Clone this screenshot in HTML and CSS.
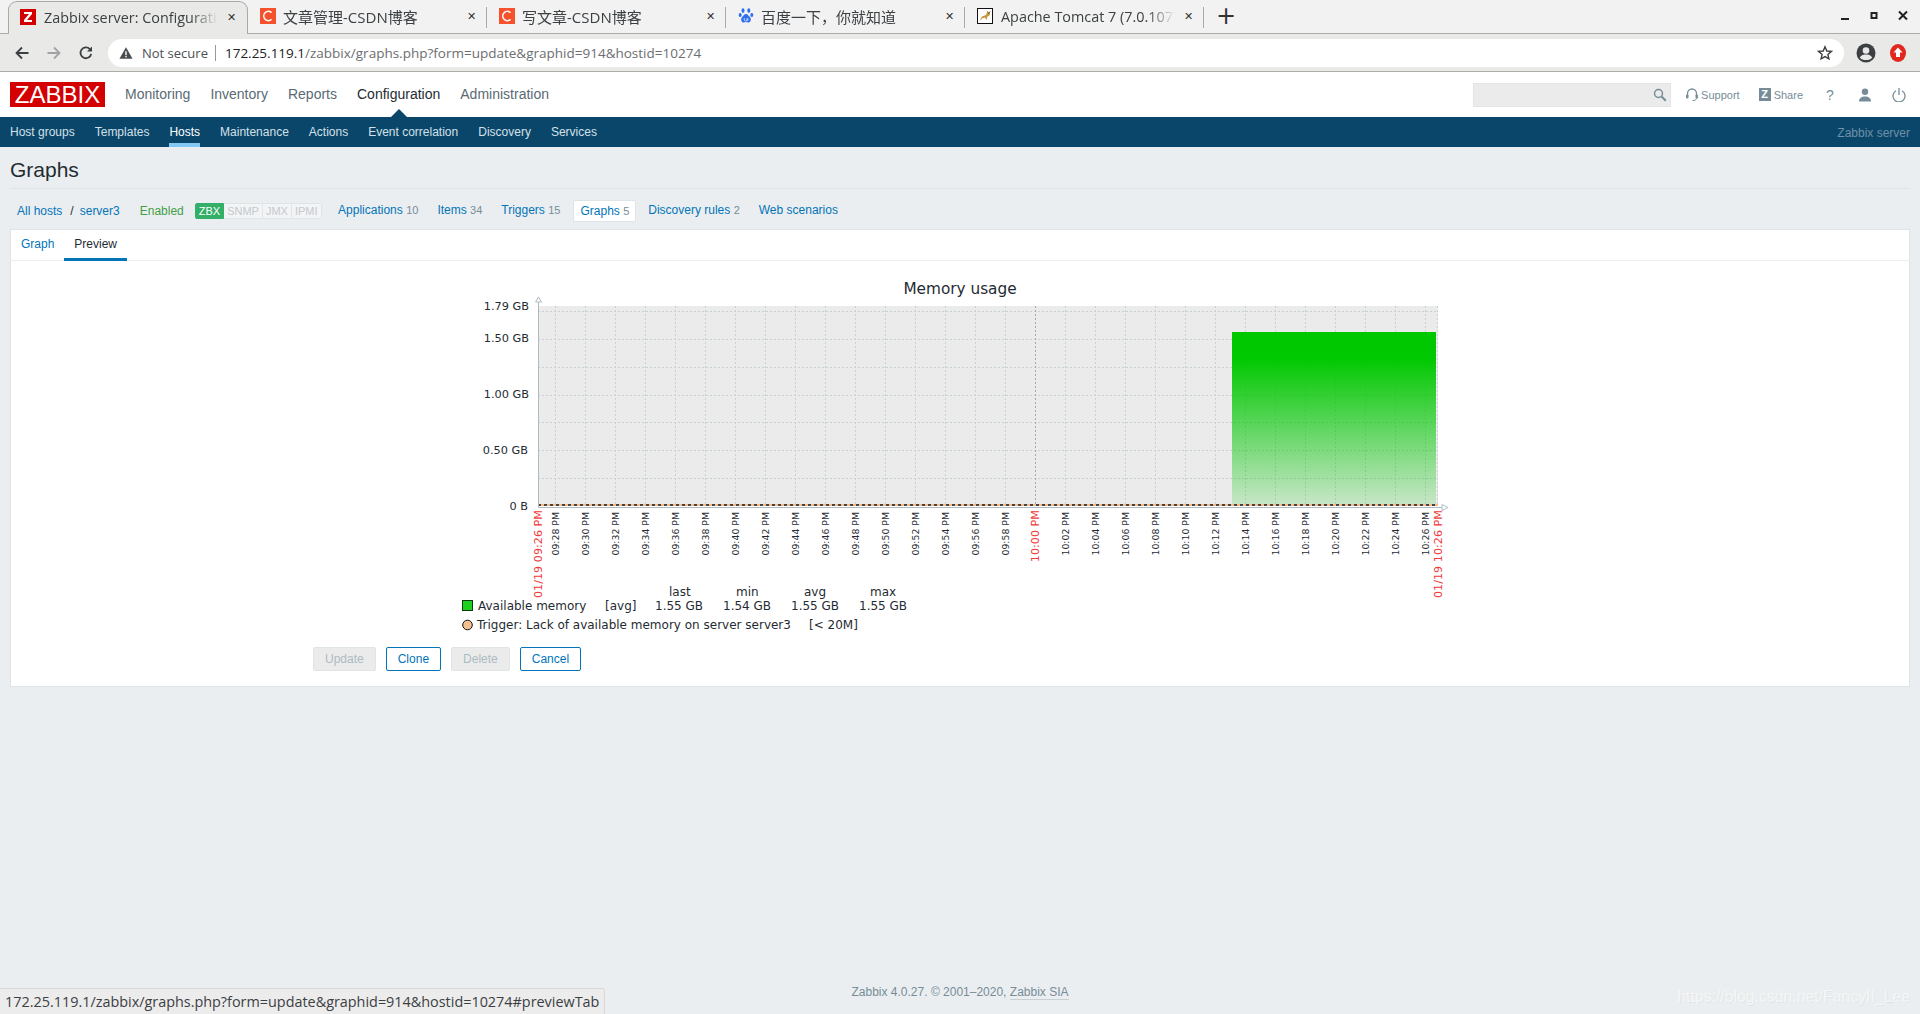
FILE: index.html
```html
<!DOCTYPE html>
<html lang="en">
<head>
<meta charset="utf-8">
<title>Zabbix server: Configuration of graphs</title>
<link rel="stylesheet" href="styles.css">
</head>
<body>
<div class="tabstrip">
  <div class="tab active">
    <svg class="fav" viewBox="0 0 16 16"><rect width="16" height="16" fill="#d40000"/><path d="M4 3h8v2l-5 6h5v2H4v-2l5-6H4z" fill="#fff"/></svg>
    <span class="tab-title">Zabbix server: Configuration of graphs</span>
    <span class="tab-x">✕</span>
  </div>
  <div class="tab">
    <svg class="fav" viewBox="0 0 16 16"><rect width="16" height="16" fill="#f4512c"/><path d="M11.500 4.600A4.600 4.600 0 1 0 11.500 11.400" fill="none" stroke="#fff" stroke-width="1.600"/></svg>
    <span class="tab-title cjk">文章管理-CSDN博客</span>
    <span class="tab-x">✕</span>
  </div>
  <div class="tab">
    <svg class="fav" viewBox="0 0 16 16"><rect width="16" height="16" fill="#f4512c"/><path d="M11.500 4.600A4.600 4.600 0 1 0 11.500 11.400" fill="none" stroke="#fff" stroke-width="1.600"/></svg>
    <span class="tab-title cjk">写文章-CSDN博客</span>
    <span class="tab-x">✕</span>
  </div>
  <div class="tab">
    <svg class="fav" viewBox="0 0 16 16"><g fill="#2d6ff0"><ellipse cx="5" cy="2.600" rx="1.500" ry="2.300"/><ellipse cx="10.800" cy="2.600" rx="1.500" ry="2.300"/><ellipse cx="2.200" cy="7" rx="1.500" ry="2.100"/><ellipse cx="13.800" cy="7" rx="1.500" ry="2.100"/><path d="M8 6c2 0 2.600 2 4 3.200 1.600 1.400 1 5.300-2 5.300-1 0-1.300-.4-2-.4s-1 .4-2 .4c-3 0-3.600-3.900-2-5.300C5.400 8 6 6 8 6z"/></g><path d="M6.300 10v2.200c0 1 2.800 1 2.800 0V10M9.800 10.500v2.300" stroke="#fff" stroke-width=".7" fill="none"/></svg>
    <span class="tab-title cjk">百度一下，你就知道</span>
    <span class="tab-x">✕</span>
  </div>
  <div class="tab">
    <svg class="fav" viewBox="0 0 16 16"><rect x=".5" y=".5" width="15" height="15" fill="#fff" stroke="#111"/><path d="M2.500 13 5 8.500l4-1.500 1.500-3.500 1 1.300 1.700-1.300-.3 3.500-2.700 2-.5 3-2-2.500-2.500 1z" fill="#c8963c"/><path d="M10.500 3.500l1 2L13.200 3.500" fill="none" stroke="#6b4a14" stroke-width=".8"/></svg>
    <span class="tab-title">Apache Tomcat 7 (7.0.107)</span>
    <span class="tab-x">✕</span>
  </div>
  <span class="newtab">+</span>
  <div class="winctl">
    <svg width="12" height="12" viewBox="0 0 12 12"><rect x="2" y="8" width="8" height="2" fill="#222"/></svg>
    <svg width="12" height="12" viewBox="0 0 12 12"><rect x="3.500" y="3" width="5" height="5" fill="none" stroke="#222" stroke-width="2"/></svg>
    <svg width="12" height="12" viewBox="0 0 12 12"><path d="M2 1.500l8 8M10 1.500l-8 8" stroke="#222" stroke-width="2"/></svg>
  </div>
</div>
<div class="toolbar">
  <svg class="tb-ic" viewBox="0 0 16 16"><path d="M14.500 8H2.500M8 2.500 2.500 8 8 13.500" fill="none" stroke="#3c4043" stroke-width="1.800"/></svg>
  <svg class="tb-ic" viewBox="0 0 16 16"><path d="M1.500 8h12M8 2.500 13.500 8 8 13.500" fill="none" stroke="#a0a2a4" stroke-width="1.800"/></svg>
  <svg class="tb-ic" viewBox="0 0 16 16"><path d="M13.200 8.800A5.400 5.400 0 1 1 11.900 4.200" fill="none" stroke="#3c4043" stroke-width="1.800"/><path d="M14 1.500v5h-5z" fill="#3c4043"/></svg>
  <div class="omnibox">
    <svg class="warn" viewBox="0 0 16 16"><path d="M8 1.500 15.500 14.500H.5z" fill="#4a4d50"/><rect x="7.200" y="6" width="1.600" height="4.500" fill="#fff"/><rect x="7.200" y="11.400" width="1.600" height="1.600" fill="#fff"/></svg>
    <span class="notsecure">Not secure</span>
    <span class="omni-sep"></span>
    <span class="url"><b class="host">172.25.119.1</b>/zabbix/graphs.php?form=update&amp;graphid=914&amp;hostid=10274</span>
    <svg class="star" viewBox="0 0 16 16"><path d="M8 1.800 9.800 6l4.600.4-3.500 3 1 4.500L8 11.600l-3.900 2.300 1-4.500-3.500-3L6.200 6z" fill="none" stroke="#3c4043" stroke-width="1.400"/></svg>
  </div>
  <svg class="acct" viewBox="0 0 20 20"><circle cx="10" cy="10" r="9.500" fill="#3c4043"/><circle cx="10" cy="7.500" r="3.300" fill="#e8e8e6"/><path d="M3.800 14.500C5 12 8 11.500 10 11.500s5 .5 6.200 3C15 16.500 12.500 17 10 17s-5-.5-6.200-2.500z" fill="#e8e8e6"/></svg>
  <svg class="upd" viewBox="0 0 16 18"><ellipse cx="8" cy="9" rx="8" ry="9" fill="#e0281e"/><path d="M8 3.500 12.500 8.500H10v4.500H6V8.500H3.500z" fill="#fff"/></svg>
</div>
<header class="zbx-head">
  <div class="logo">ZABBIX</div>
  <nav class="mainmenu">
    <a>Monitoring</a><a>Inventory</a><a>Reports</a><a class="sel">Configuration</a><a>Administration</a>
  </nav>
  <div class="head-right">
    <div class="search">
      <svg width="14" height="14" viewBox="0 0 14 14"><circle cx="5.500" cy="5.500" r="4" fill="none" stroke="#768d99" stroke-width="1.500"/><path d="M8.500 8.500l4.300 4.300" stroke="#768d99" stroke-width="2"/></svg>
    </div>
    <a class="hlink support"><svg width="12" height="14" viewBox="0 0 12 14"><path d="M1.500 8V5.500a4.500 4.500 0 0 1 9 0V8" fill="none" stroke="#768d99" stroke-width="1.300"/><rect x="0" y="6.500" width="2.500" height="4" rx="1" fill="#768d99"/><rect x="9.500" y="6.500" width="2.500" height="4" rx="1" fill="#768d99"/><path d="M10.500 10c0 2-2 2.600-4 2.600" fill="none" stroke="#768d99"/></svg>Support</a>
    <a class="hlink share"><span class="zsq">Z</span>Share</a>
    <a class="hicon qm">?</a>
    <svg class="hicon" width="14" height="14" viewBox="0 0 14 14"><circle cx="7" cy="3.800" r="3.200" fill="#768d99"/><path d="M1 13.500c0-3.500 2.500-5 6-5s6 1.500 6 5z" fill="#768d99"/></svg>
    <svg class="hicon" width="14" height="14" viewBox="0 0 14 14"><path d="M4 2.800a6 6 0 1 0 6 0" fill="none" stroke="#768d99" stroke-width="1.300"/><path d="M7 0v7" stroke="#768d99" stroke-width="1.300"/></svg>
  </div>
  <span class="menu-tri"></span>
</header>
<nav class="subnav">
  <a>Host groups</a><a>Templates</a><a class="sel">Hosts</a><a>Maintenance</a><a>Actions</a><a>Event correlation</a><a>Discovery</a><a>Services</a>
  <span class="srv">Zabbix server</span>
</nav>
<main class="page">
  <h1 class="ptitle">Graphs</h1>
  <div class="hostnav">
    <a class="crumb">All hosts</a><span class="slash">/</span><a class="crumb">server3</a>
    <span class="enabled">Enabled</span>
    <span class="badges"><span class="bdg on">ZBX</span><span class="bdg">SNMP</span><span class="bdg">JMX</span><span class="bdg">IPMI</span></span>
    <a class="hn first">Applications <i>10</i></a>
    <a class="hn">Items <i>34</i></a>
    <a class="hn">Triggers <i>15</i></a>
    <a class="hn cur">Graphs <i>5</i></a>
    <a class="hn">Discovery rules <i>2</i></a>
    <a class="hn">Web scenarios</a>
  </div>
  <section class="card">
    <div class="cardtabs"><a class="ct">Graph</a><a class="ct on">Preview</a></div>
    <div class="graphwrap">
      <svg class="graph" width="1000" height="366" viewBox="0 0 1000 366">
        <defs>
          <linearGradient id="memfill" x1="0" y1="0" x2="0" y2="1">
            <stop offset="0" stop-color="#00c800"/>
            <stop offset=".15" stop-color="#00c800"/>
            <stop offset="1" stop-color="#00c800" stop-opacity=".15"/>
          </linearGradient>
        </defs>
        <text class="gt" x="500" y="24" text-anchor="middle">Memory usage</text>
        <rect x="78" y="36" width="900" height="200" fill="#ebebeb"/>
        <path class="grid" d="M78 41.500H978M78 69.500H978M78 97.500H978M78 125.500H978M78 152.500H978M78 180.500H978M78 208.500H978"/>
        <path class="grid" d="M95.500 36V236M125.500 36V236M155.500 36V236M185.500 36V236M215.500 36V236M245.500 36V236M275.500 36V236M305.500 36V236M335.500 36V236M365.500 36V236M395.500 36V236M425.500 36V236M455.500 36V236M485.500 36V236M515.500 36V236M545.500 36V236M605.500 36V236M635.500 36V236M665.500 36V236M695.500 36V236M725.500 36V236M755.500 36V236M785.500 36V236M815.500 36V236M845.500 36V236M875.500 36V236M905.500 36V236M935.500 36V236M965.500 36V236M977.500 36V236"/>
        <path class="grid-mid" d="M575.500 36V236"/>
        <rect x="772" y="62" width="204" height="173" fill="url(#memfill)"/>
        <path d="M78 235H978" stroke="#f5b98a" stroke-width="2"/>
        <path d="M78 235H978" stroke="#444" stroke-width="2" stroke-dasharray="3 3"/>
        <path class="axis" d="M78.500 32V237.500H982"/>
        <path class="arrow" d="M75.500 32 78.500 27 81.500 32zM982 234.500 988 237.500 982 240.500z"/>
        <g class="yl">
          <text x="69" y="40">1.79 GB</text>
          <text x="69" y="72">1.50 GB</text>
          <text x="69" y="128">1.00 GB</text>
          <text x="68" y="184">0.50 GB</text>
          <text x="68" y="240">0 B</text>
        </g>
        <g class="tl">
          <text transform="translate(99 242) rotate(-90)" text-anchor="end">09:28 PM</text>
          <text transform="translate(129 242) rotate(-90)" text-anchor="end">09:30 PM</text>
          <text transform="translate(159 242) rotate(-90)" text-anchor="end">09:32 PM</text>
          <text transform="translate(189 242) rotate(-90)" text-anchor="end">09:34 PM</text>
          <text transform="translate(219 242) rotate(-90)" text-anchor="end">09:36 PM</text>
          <text transform="translate(249 242) rotate(-90)" text-anchor="end">09:38 PM</text>
          <text transform="translate(279 242) rotate(-90)" text-anchor="end">09:40 PM</text>
          <text transform="translate(309 242) rotate(-90)" text-anchor="end">09:42 PM</text>
          <text transform="translate(339 242) rotate(-90)" text-anchor="end">09:44 PM</text>
          <text transform="translate(369 242) rotate(-90)" text-anchor="end">09:46 PM</text>
          <text transform="translate(399 242) rotate(-90)" text-anchor="end">09:48 PM</text>
          <text transform="translate(429 242) rotate(-90)" text-anchor="end">09:50 PM</text>
          <text transform="translate(459 242) rotate(-90)" text-anchor="end">09:52 PM</text>
          <text transform="translate(489 242) rotate(-90)" text-anchor="end">09:54 PM</text>
          <text transform="translate(519 242) rotate(-90)" text-anchor="end">09:56 PM</text>
          <text transform="translate(549 242) rotate(-90)" text-anchor="end">09:58 PM</text>
          <text transform="translate(609 242) rotate(-90)" text-anchor="end">10:02 PM</text>
          <text transform="translate(639 242) rotate(-90)" text-anchor="end">10:04 PM</text>
          <text transform="translate(669 242) rotate(-90)" text-anchor="end">10:06 PM</text>
          <text transform="translate(699 242) rotate(-90)" text-anchor="end">10:08 PM</text>
          <text transform="translate(729 242) rotate(-90)" text-anchor="end">10:10 PM</text>
          <text transform="translate(759 242) rotate(-90)" text-anchor="end">10:12 PM</text>
          <text transform="translate(789 242) rotate(-90)" text-anchor="end">10:14 PM</text>
          <text transform="translate(819 242) rotate(-90)" text-anchor="end">10:16 PM</text>
          <text transform="translate(849 242) rotate(-90)" text-anchor="end">10:18 PM</text>
          <text transform="translate(879 242) rotate(-90)" text-anchor="end">10:20 PM</text>
          <text transform="translate(909 242) rotate(-90)" text-anchor="end">10:22 PM</text>
          <text transform="translate(939 242) rotate(-90)" text-anchor="end">10:24 PM</text>
          <text transform="translate(969 242) rotate(-90)" text-anchor="end">10:26 PM</text>
        </g>
        <g class="tr">
          <text transform="translate(82 240) rotate(-90)" text-anchor="end">01/19 09:26 PM</text>
          <text transform="translate(579 240) rotate(-90)" text-anchor="end">10:00 PM</text>
          <text transform="translate(982 240) rotate(-90)" text-anchor="end">01/19 10:26 PM</text>
        </g>
        <g class="lg">
          <text x="209" y="326">last</text>
          <text x="276" y="326">min</text>
          <text x="344" y="326">avg</text>
          <text x="410" y="326">max</text>
          <rect x="2.500" y="330.500" width="10" height="10" fill="#1ed01e" stroke="#0a3a0a"/>
          <text x="18" y="340">Available memory</text>
          <text x="145" y="340">[avg]</text>
          <text x="195" y="340">1.55 GB</text>
          <text x="263" y="340">1.54 GB</text>
          <text x="331" y="340">1.55 GB</text>
          <text x="399" y="340">1.55 GB</text>
          <circle cx="7.500" cy="355" r="4.800" fill="#f5c090" stroke="#111"/>
          <text x="17" y="359">Trigger: Lack of available memory on server server3</text>
          <text x="349" y="359">[&lt; 20M]</text>
        </g>
      </svg>
    </div>
    <div class="formbtns">
      <button class="btn dis">Update</button>
      <button class="btn">Clone</button>
      <button class="btn dis">Delete</button>
      <button class="btn">Cancel</button>
    </div>
  </section>
  <footer class="foot">Zabbix 4.0.27. © 2001–2020, <a>Zabbix SIA</a></footer>
</main>
<div class="status">172.25.119.1/zabbix/graphs.php?form=update&amp;graphid=914&amp;hostid=10274#previewTab</div>
<div class="wm">https://blog.csdn.net/FancyII_Lee</div>
</body>
</html>
```
FILE: styles.css
```css
*{box-sizing:border-box}
html,body{margin:0;height:1014px;overflow:hidden}
body{display:flex;flex-direction:column;font-family:"Liberation Sans",Arial,sans-serif;font-size:12px;background:#ebeef0;color:#1f2c33}
a{cursor:pointer}

.tabstrip{height:34px;flex:none;display:flex;align-items:stretch;background:#f2f2f2;padding:1px 0 0 8px;border-bottom:1px solid #aeaca8;font-family:"Open Sans","Noto Sans CJK SC",sans-serif;font-size:14.400px;color:#3c4043;position:relative}
.tab{width:239px;display:flex;align-items:center;padding:0 5.500px 2px 12px;position:relative}
.tab::after{content:"";position:absolute;right:0;top:6px;height:21px;width:1px;background:#aaa}
.tab.active{width:240px;background:#e9e9e7;border:1px solid #a9a9a6;border-bottom:0;border-radius:9px 9px 0 0;margin-bottom:-1px;color:#3c4043;padding-left:11px}
.tab.active::after{display:none}
.fav{width:16px;height:16px;flex:none;margin-right:8px}
.tab-title{flex:1;white-space:nowrap;overflow:hidden;margin-right:4px;-webkit-mask-image:linear-gradient(90deg,#000 84%,transparent);mask-image:linear-gradient(90deg,#000 84%,transparent);min-width:0}
.tab-title.cjk{font-size:15px;margin-left:-1px}
.tab-x{flex:none;width:20px;text-align:center;font-size:11px;font-family:"DejaVu Sans",sans-serif;color:#333;font-weight:700}
.newtab{font-size:24px;line-height:30px;width:44px;text-align:center;color:#333;font-family:"DejaVu Sans",sans-serif}
.winctl{margin-left:auto;display:flex;gap:17px;align-items:center;padding:0 11px 2px 0}

.toolbar{height:38px;flex:none;background:#e9e9e7;border-bottom:1px solid #aeaca8;display:flex;align-items:center;padding:0 14px}
.tb-ic{width:16px;height:16px;flex:none;margin-right:16px}
.omnibox{width:1736px;height:28px;margin-left:-2px;background:#fff;border-radius:14px;display:flex;align-items:center;padding:0 10px 0 11px;font-family:"Open Sans",sans-serif;font-size:13.500px;color:#5f6368;flex:none}
.warn{width:14px;height:14px;margin-right:9px;flex:none}
.notsecure{color:#4c4f52;font-size:13px}
.omni-sep{width:1px;height:16px;background:#999;margin:0 9px 0 7px}
.url{flex:1;color:#6c6e70;white-space:nowrap}
.host{font-weight:400;color:#202124}
.star{width:16px;height:16px;flex:none;margin-right:1px}
.acct{width:20px;height:20px;flex:none;margin-left:12px}
.upd{width:16px;height:18px;flex:none;margin-left:14px}

.zbx-head{height:45px;flex:none;background:#fff;display:flex;align-items:center;padding:0 14px 0 10px;position:relative}
.logo{width:95px;height:25px;background:#d40000;color:#fff;font-size:24px;line-height:26px;text-align:center;white-space:nowrap}
.mainmenu{display:flex;gap:20px;margin:-2px 0 0 20px;font-size:14px;color:#5a6a74}
.mainmenu .sel{color:#1f2c33}
.menu-tri{position:absolute;left:391px;bottom:0;width:0;height:0;border:8px solid transparent;border-top:0;border-bottom-color:#0a466a}
.head-right{margin-left:auto;display:flex;align-items:center;color:#768d99;font-size:11px}
.search{width:198px;height:24px;background:#ebebeb;border:1px solid #e2e4e6;display:flex;align-items:center;justify-content:flex-end;padding-right:3px}
.hlink{display:flex;align-items:center;gap:3px}
.support{margin-left:15px}
.share{margin-left:19px}
.zsq{width:12px;height:13px;background:#768d99;color:#fff;font-weight:700;font-size:11px;line-height:13px;text-align:center}
.hicon{margin-left:20px;flex:none}
.qm{margin-left:23px;font-size:14px;width:8px}
.head-right .qm + svg{margin-left:24px}

.subnav{height:30px;flex:none;background:#0a466a;display:flex;align-items:center;gap:20px;padding:0 10px;color:#d4e0e8}
.subnav a{height:30px;line-height:31px}
.subnav .sel{color:#fff;border-bottom:4px solid #84c8f4}
.srv{margin-left:auto;color:#6e90a8;padding-top:1px}

.page{flex:1;display:flex;flex-direction:column;padding:0 10px;min-height:0}
.ptitle{margin:0;height:42px;border-bottom:1px solid #e0e4e7;font-size:21px;font-weight:400;line-height:45px;color:#1f2c33}
.hostnav{display:flex;align-items:center;height:40px;padding:3px 0 0 7px;color:#0275b8}
.crumb{color:#0275b8}
.slash{margin:0 6px 0 8px;color:#1f2c33}
.enabled{color:#429e47;margin-left:20px}
.badges{display:flex;height:16px;margin-left:11px;margin-right:3.500px}
.bdg{padding:0 3px;border:1px solid #dfe4e7;border-left:0;color:#c3c9cc;font-size:11px;line-height:14px;background:#f3f4f5}
.bdg.on{background:#34af67;color:#fff;border:1px solid #34af67;border-radius:2px 0 0 2px}
.bdg:last-child{border-radius:0 2px 2px 0}
.hn{padding:0 6px;height:22px;line-height:20px;margin-left:7px;border:0}
.hn i{font-style:normal;color:#768d99;font-size:11px}
.hn.cur{background:#fff;border:1px solid #dfe4e7;border-radius:2px;padding:0 6px}
.hn.cur + .hn{margin-left:6px}
.card{height:458px;flex:none;background:#fff;border:1px solid #dfe4e7;display:flex;flex-direction:column}
.cardtabs{height:31px;flex:none;display:flex;border-bottom:1px solid #ebeef0;padding-left:0}
.ct{padding:0 10px;color:#0275b8;line-height:28px;height:31px}
.ct.on{color:#1f2c33;border-bottom:3px solid #0275b8}
.graphwrap{display:flex;justify-content:center;height:386px;flex:none;padding-top:9px}
.graph{display:block;overflow:visible;font-family:"DejaVu Sans",sans-serif}
.gt{font-size:15.300px;fill:#1f2c33}
.grid{fill:none;stroke:#c6d0d6;stroke-width:1;stroke-dasharray:2 2}
.grid-mid{fill:none;stroke:#a9a9a9;stroke-width:1;stroke-dasharray:2 2}
.axis{fill:none;stroke:#acbbc2;stroke-width:1}
.arrow{fill:#fff;stroke:#acbbc2;stroke-width:1}
.yl text{font-size:11.300px;fill:#1f2c33;text-anchor:end}
.tl text{font-size:9.330px;fill:#1f2c33}
.tr text{font-size:11.200px;fill:#ef3a3a}
.lg text{font-size:12px;fill:#1f2c33}
.formbtns{display:flex;gap:10px;padding-left:302px}
.btn{height:24px;padding:0 11px;font:12px "Liberation Sans",Arial,sans-serif;background:#fff;color:#0275b8;border:1px solid #0275b8;border-radius:2px}
.btn.dis{background:#ebebeb;color:#acbbc2;border-color:#dfe4e7}
.foot{margin-top:auto;height:31px;text-align:center;color:#768d99;font-size:12px;line-height:18px}
.foot a{border-bottom:1px solid #c8d0d4}

.status{position:absolute;left:0;bottom:0;width:605px;height:26px;background:#ececec;border:1px solid #d8d8d8;border-width:1px 1px 0 0;border-radius:0 3px 0 0;padding-left:5px;font-family:"Open Sans",sans-serif;font-size:14.400px;line-height:25px;color:#3c4043;white-space:nowrap}
.wm{position:absolute;right:10px;bottom:8px;font-size:15.800px;color:#f4f6f7;text-shadow:1px 1px 0 rgba(0,0,0,.06)}
```
